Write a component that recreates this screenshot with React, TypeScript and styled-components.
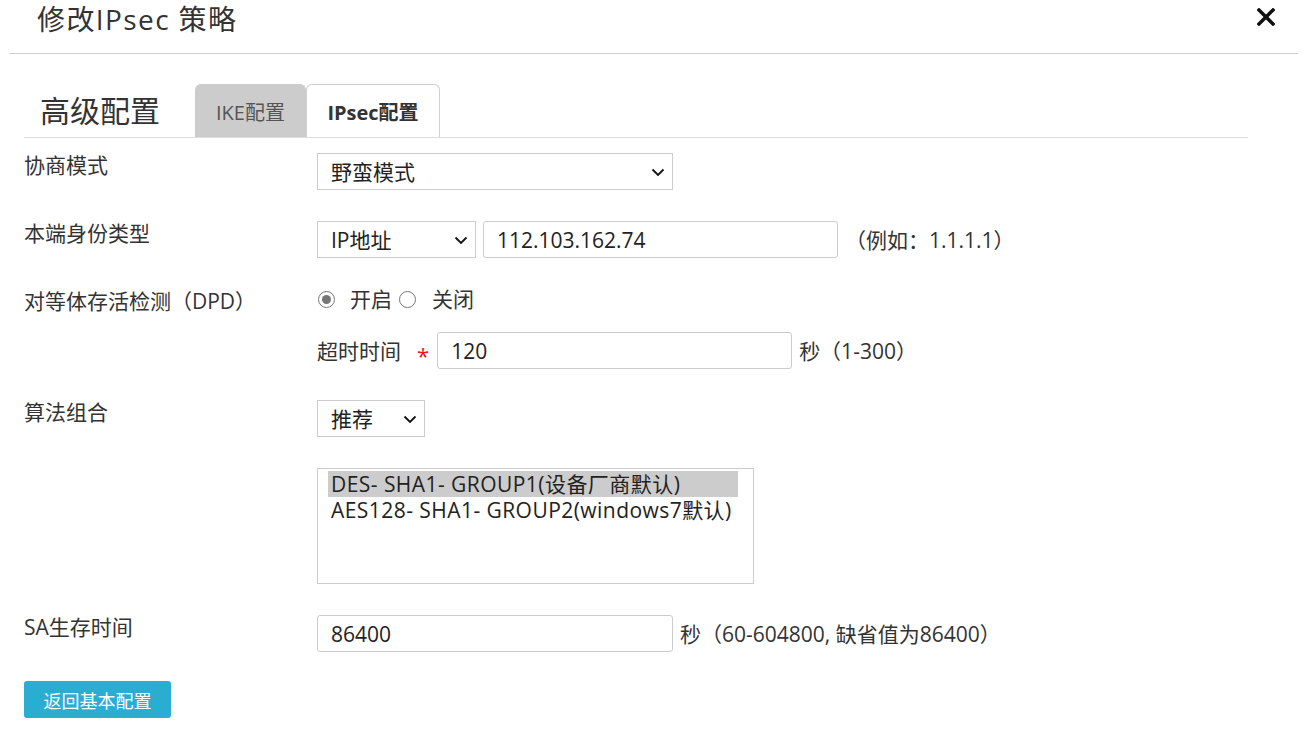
import React from "react";
import styled, { createGlobalStyle } from "styled-components";

const GlobalStyle = createGlobalStyle`
  html, body { margin: 0; padding: 0; background: #fff; }
  body { font-family: "Open Sans", "Noto Sans CJK SC", sans-serif; color: #333; }
  * { box-sizing: border-box; }
`;

const Page = styled.div`
  width: 1304px;
  min-height: 756px;
  background: #fff;
`;

const Header = styled.div`
  margin: 0 6px 0 9px;
  height: 54px;
  border-bottom: 1px solid #cfcfcf;
  display: flex;
  align-items: flex-start;
  justify-content: space-between;
  padding-left: 28px;
`;

const Title = styled.h1`
  margin: 0;
  font-size: 28px;
  line-height: 38px;
  letter-spacing: 1.4px;
  font-weight: 400;
  color: #333;
`;

const CloseButton = styled.button`
  border: 0;
  background: none;
  padding: 0;
  margin: 8px 23px 0 0;
  width: 18px;
  height: 18px;
  display: flex;
  cursor: pointer;
`;

const Content = styled.div`
  padding: 0 56px 0 24px;
`;

const TabBar = styled.div`
  margin-top: 30px;
  height: 54px;
  border-bottom: 1px solid #dedede;
  display: flex;
  align-items: stretch;
`;

const SectionTitle = styled.div`
  width: 171px;
  padding-left: 16px;
  font-size: 30px;
  line-height: 53px;
  color: #333;
`;

const Tab = styled.div<{ $active?: boolean }>`
  width: ${(p) => (p.$active ? "134px" : "111px")};
  height: 53px;
  display: flex;
  align-items: center;
  justify-content: center;
  font-size: 20px;
  font-weight: ${(p) => (p.$active ? 700 : 400)};
  color: ${(p) => (p.$active ? "#333" : "#555")};
  background: ${(p) => (p.$active ? "#fff" : "#cccccc")};
  border: 1px solid ${(p) => (p.$active ? "#cfcfcf" : "#cccccc")};
  border-bottom: 0;
  border-radius: 6px 6px 0 0;
`;

const Form = styled.div`
  margin-top: 15px;
  display: grid;
  grid-template-columns: 293px 1fr;
  row-gap: 31px;
  align-items: start;
`;

const Label = styled.div`
  font-size: 21px;
  line-height: 24px;
  color: #333;
  white-space: nowrap;
`;

const Field = styled.div`
  height: 37px;
  display: flex;
  align-items: center;
  gap: 7px;
`;

const FieldColumn = styled.div`
  margin-top: -2px;
  display: flex;
  flex-direction: column;
  gap: 21px;
`;

const SelectWrap = styled.div<{ $w: number }>`
  position: relative;
  width: ${(p) => p.$w}px;
  height: 37px;
  flex: none;
`;

const NativeSelect = styled.select`
  appearance: none;
  -webkit-appearance: none;
  width: 100%;
  height: 100%;
  border: 1px solid #cccccc;
  border-radius: 0;
  background: #fff;
  padding: 0 30px 0 13px;
  font-family: inherit;
  font-size: 21px;
  color: #222;
  outline: none;
`;

const Chevron = styled.svg`
  position: absolute;
  right: 8px;
  top: 15px;
  pointer-events: none;
`;

const TextInput = styled.input<{ $w: number }>`
  width: ${(p) => p.$w}px;
  height: 37px;
  flex: none;
  border: 1px solid #cccccc;
  border-radius: 3px;
  padding: 0 13px;
  font-family: inherit;
  font-size: 21px;
  color: #222;
  outline: none;
`;

const Hint = styled.span`
  font-size: 21px;
  line-height: 24px;
  color: #333;
  white-space: nowrap;
`;

const RadioLine = styled.div`
  height: 24px;
  display: flex;
  align-items: center;
  font-size: 21px;
  line-height: 24px;
  color: #333;
`;

const RadioDot = styled.span<{ $checked?: boolean }>`
  width: 17px;
  height: 17px;
  border-radius: 50%;
  border: 1.5px solid #777;
  display: inline-flex;
  align-items: center;
  justify-content: center;
  margin: 0 ${(p) => (p.$checked ? "15px" : "16px")} 0 1px;
  &::after {
    content: "";
    width: 9px;
    height: 9px;
    border-radius: 50%;
    background: ${(p) => (p.$checked ? "#777" : "transparent")};
  }
`;

const RadioText = styled.span`
  margin-right: 6px;
`;

const SubLabel = styled.span`
  font-size: 21px;
  line-height: 24px;
  color: #333;
  white-space: nowrap;
`;

const Required = styled.span`
  color: #e4161b;
  font-size: 22px;
  line-height: 1;
  margin: 8px 1px 0 9px;
`;

const ListBox = styled.div`
  width: 437px;
  height: 116px;
  border: 1px solid #cccccc;
  padding: 2px 0 0 10px;
`;

const ListOption = styled.div<{ $selected?: boolean }>`
  width: 410px;
  height: 26px;
  line-height: 26px;
  padding-left: 3px;
  font-size: 21px;
  letter-spacing: 0.45px;
  color: #222;
  white-space: nowrap;
  background: ${(p) => (p.$selected ? "#cccccc" : "transparent")};
`;

const Empty = styled.div``;

const BackButton = styled.button`
  grid-column: 1 / -1;
  justify-self: start;
  margin-top: -2px;
  width: 147px;
  height: 37px;
  border: 0;
  border-radius: 3px;
  background: #2badd2;
  color: #fff;
  font-family: "Noto Sans CJK SC", sans-serif;
  font-size: 18px;
  cursor: pointer;
`;

const Select = ({ w, value, options }: { w: number; value: string; options: string[] }) => (
  <SelectWrap $w={w}>
    <NativeSelect defaultValue={value}>
      {options.map((o) => (
        <option key={o}>{o}</option>
      ))}
    </NativeSelect>
    <Chevron width="14" height="9" viewBox="0 0 14 9">
      <path d="M1.5 1.5 L7 7 L12.5 1.5" fill="none" stroke="#111" strokeWidth="1.8" />
    </Chevron>
  </SelectWrap>
);

export default function App() {
  return (
    <Page>
      <GlobalStyle />
      <Header>
        <Title>修改IPsec 策略</Title>
        <CloseButton aria-label="关闭">
          <svg width="18" height="18" viewBox="0 0 18 18">
            <path d="M2 2 L16 16 M16 2 L2 16" stroke="#111" strokeWidth="3.4" strokeLinecap="square" />
          </svg>
        </CloseButton>
      </Header>
      <Content>
        <TabBar>
          <SectionTitle>高级配置</SectionTitle>
          <Tab>IKE配置</Tab>
          <Tab $active>IPsec配置</Tab>
        </TabBar>
        <Form>
          <Label>协商模式</Label>
          <Field>
            <Select w={356} value="野蛮模式" options={["主模式", "野蛮模式"]} />
          </Field>

          <Label>本端身份类型</Label>
          <Field>
            <Select w={159} value="IP地址" options={["IP地址", "域名"]} />
            <TextInput $w={355} defaultValue="112.103.162.74" />
            <Hint>（例如：1.1.1.1）</Hint>
          </Field>

          <Label>对等体存活检测（DPD）</Label>
          <FieldColumn>
            <RadioLine>
              <RadioDot $checked />
              <RadioText>开启</RadioText>
              <RadioDot />
              <RadioText>关闭</RadioText>
            </RadioLine>
            <Field>
              <SubLabel>超时时间</SubLabel>
              <Required>*</Required>
              <TextInput $w={355} defaultValue="120" />
              <Hint>秒（1-300）</Hint>
            </Field>
          </FieldColumn>

          <Label>算法组合</Label>
          <Field>
            <Select w={108} value="推荐" options={["推荐", "自定义"]} />
          </Field>

          <Empty />
          <ListBox>
            <ListOption $selected>DES- SHA1- GROUP1(设备厂商默认)</ListOption>
            <ListOption>AES128- SHA1- GROUP2(windows7默认)</ListOption>
          </ListBox>

          <Label>SA生存时间</Label>
          <Field>
            <TextInput $w={356} defaultValue="86400" />
            <Hint>秒（60-604800, 缺省值为86400）</Hint>
          </Field>

          <BackButton>返回基本配置</BackButton>
        </Form>
      </Content>
    </Page>
  );
}
